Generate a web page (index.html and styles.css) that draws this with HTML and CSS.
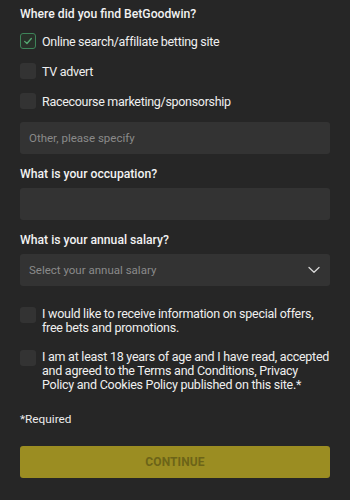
FILE: index.html
```html
<!DOCTYPE html>
<html lang="en">
<head>
<meta charset="utf-8">
<link rel="stylesheet" href="styles.css">
</head>
<body>
<form class="form">
  <div class="label first">Where did you find BetGoodwin?</div>
  <div class="checks">
    <div class="check-row">
      <span class="box checked">
        <svg viewBox="0 0 16 16" width="14" height="14"><path d="M4.2 8.4 L6.8 10.9 L11.8 5.1" fill="none" stroke="#55a872" stroke-width="1.5" stroke-linecap="round" stroke-linejoin="round"/></svg>
      </span>
      <span class="check-text">Online search/affiliate betting site</span>
    </div>
    <div class="check-row">
      <span class="box"></span>
      <span class="check-text">TV advert</span>
    </div>
    <div class="check-row">
      <span class="box"></span>
      <span class="check-text">Racecourse marketing/sponsorship</span>
    </div>
  </div>
  <div class="field other"><span class="placeholder">Other, please specify</span></div>

  <div class="label">What is your occupation?</div>
  <div class="field"></div>

  <div class="label">What is your annual salary?</div>
  <div class="field select">
    <span class="placeholder">Select your annual salary</span>
    <svg class="chev" viewBox="0 0 12 8" width="12" height="8"><path d="M1 1.5 L6 6.2 L11 1.5" fill="none" stroke="#d8d8d8" stroke-width="1.3" stroke-linecap="round" stroke-linejoin="round"/></svg>
  </div>

  <div class="consent first-consent">
    <span class="box"></span>
    <span class="consent-text">I would like to receive information on special offers, free bets and promotions.</span>
  </div>
  <div class="consent second-consent">
    <span class="box"></span>
    <span class="consent-text">I am at least 18 years of age and I have read, accepted and agreed to the Terms and Conditions, Privacy Policy and Cookies Policy published on this site.*</span>
  </div>

  <div class="required">*Required</div>

  <div class="button">CONTINUE</div>
</form>
</body>
</html>
```

FILE: styles.css
```css
html, body {
  margin: 0;
  padding: 0;
  background: #262626;
}
body {
  font-family: Roboto, "Liberation Sans", Arial, sans-serif;
  color: #ececec;
  width: 350px;
  height: 500px;
  overflow: hidden;
}
.form {
  padding: 0 20px;
  display: flex;
  flex-direction: column;
}
.label {
  font-size: 12.2px;
  font-weight: 500;
  line-height: 16px;
  margin-top: 12px;
  margin-bottom: 6px;
  color: #f2f2f2;
}
.label.first {
  margin-top: 6px;
  margin-bottom: 11px;
}
.checks {
  display: flex;
  flex-direction: column;
  gap: 14px;
}
.check-row {
  display: flex;
  align-items: center;
  height: 16px;
}
.box {
  width: 16px;
  height: 16px;
  box-sizing: border-box;
  border-radius: 3px;
  background: #333333;
  flex: none;
  display: flex;
  align-items: center;
  justify-content: center;
}
.box.checked {
  border: 1.5px solid #3e8459;
  background: #283029;
}
.check-text {
  margin-left: 6px;
  font-size: 12.5px;
  letter-spacing: -0.3px;
  color: #efefef;
}
.field {
  height: 32px;
  background: #333333;
  border-radius: 3px;
  display: flex;
  align-items: center;
  padding: 0 9px;
}
.field.other { margin-top: 13px; }
.placeholder {
  font-size: 11.5px;
  color: #8a8a8a;
}
.select {
  justify-content: space-between;
  padding-right: 10px;
}
.consent {
  display: flex;
  align-items: flex-start;
}
.first-consent { margin-top: 21px; }
.second-consent { margin-top: 15px; }
.consent-text {
  margin-left: 6px;
  font-size: 12.5px;
  letter-spacing: -0.25px;
  line-height: 14px;
  color: #efefef;
}
.required {
  font-size: 11.8px;
  margin-top: 19px;
  line-height: 16px;
  color: #ececec;
}
.button {
  margin-top: 19px;
  height: 32px;
  background: #9b8d22;
  border-radius: 3px;
  display: flex;
  align-items: center;
  justify-content: center;
  font-size: 12px;
  font-weight: 700;
  color: #6c6418;
  letter-spacing: 0.1px;
}
```
